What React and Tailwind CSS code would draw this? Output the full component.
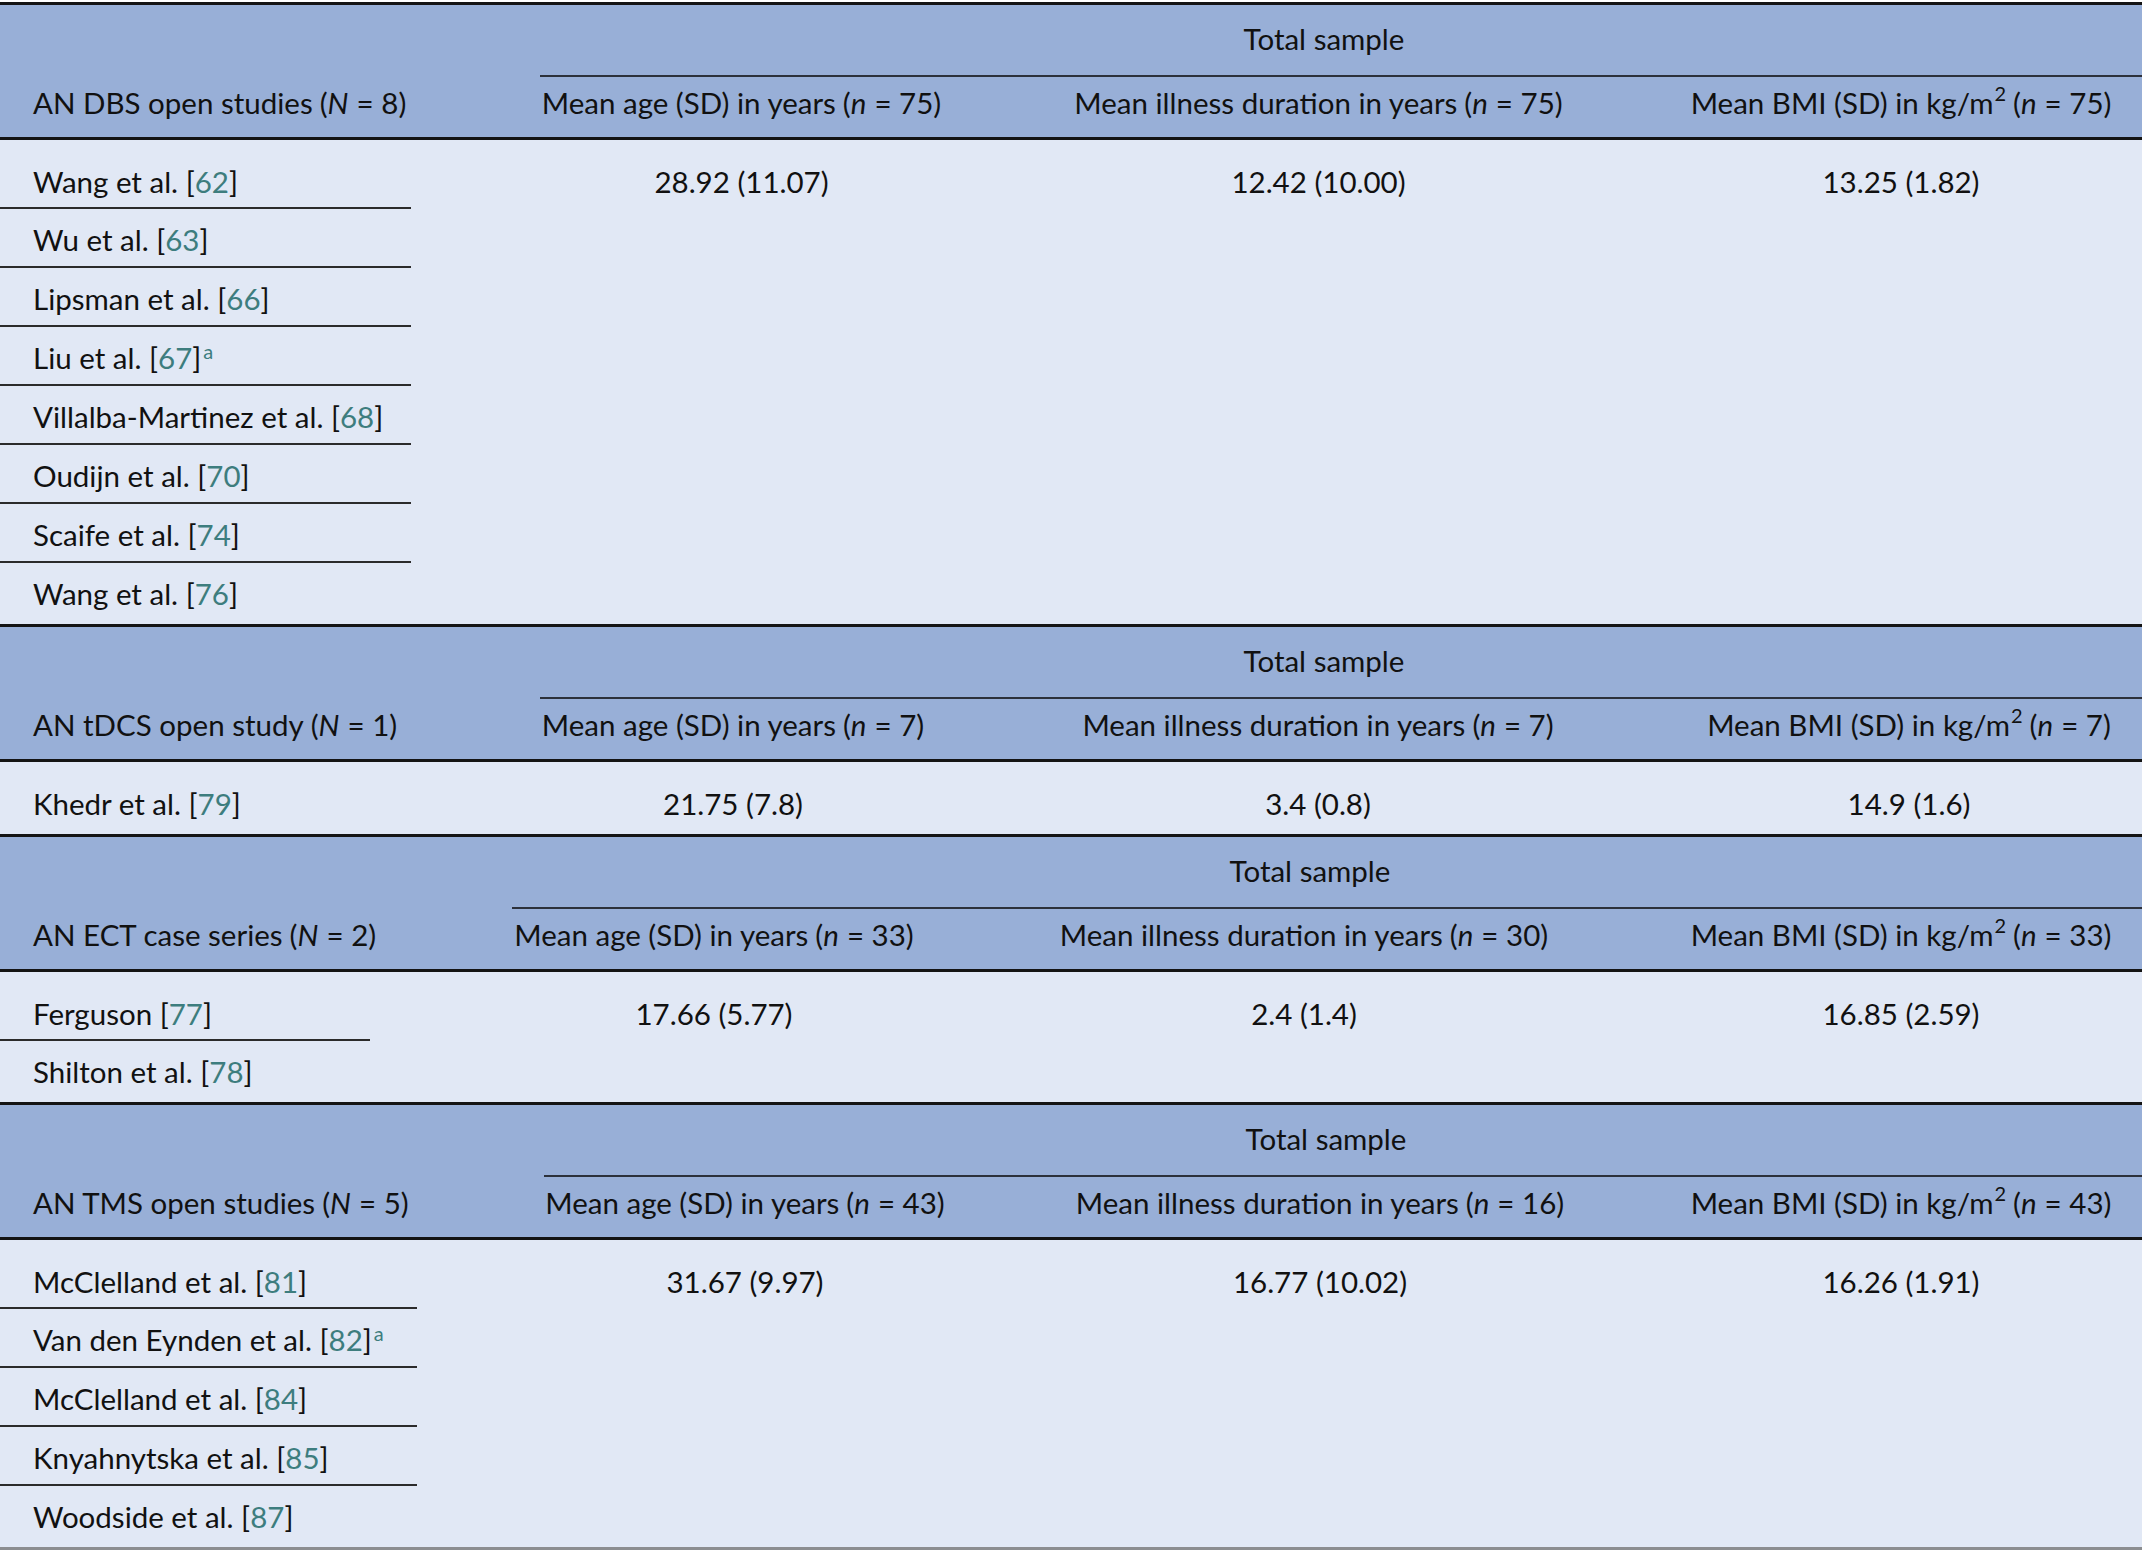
import { Fragment } from "react";

// each block of the table has its own column widths (auto layout in the source)
const sections = [
    {
        title: "AN DBS open studies",
        N: 8,
        grid: "grid-cols-[540px_532px_623px_447px]",
        pads: ["pr-[129px]", "pr-[130px]", "pr-[35px]"],
        line: "w-[411px]",
        n: [75, 75, 75],
        values: ["28.92 (11.07)", "12.42 (10.00)", "13.25 (1.82)"],
        studies: [
            ["Wang et al.", 62],
            ["Wu et al.", 63],
            ["Lipsman et al.", 66],
            ["Liu et al.", 67, true],
            ["Villalba-Martinez et al.", 68],
            ["Oudijn et al.", 70],
            ["Scaife et al.", 74],
            ["Wang et al.", 76],
        ],
    },
    {
        title: "AN tDCS open study",
        N: 1,
        grid: "grid-cols-[540px_539px_631px_432px]",
        pads: ["pr-[153px]", "pr-[153px]", "pr-[34px]"],
        line: "w-[411px]",
        n: [7, 7, 7],
        values: ["21.75 (7.8)", "3.4 (0.8)", "14.9 (1.6)"],
        studies: [["Khedr et al.", 79]],
    },
    {
        title: "AN ECT case series",
        N: 2,
        grid: "grid-cols-[512px_546px_637px_447px]",
        pads: ["pr-[142px]", "pr-[145px]", "pr-[35px]"],
        line: "w-[370px]",
        n: [33, 30, 33],
        values: ["17.66 (5.77)", "2.4 (1.4)", "16.85 (2.59)"],
        studies: [
            ["Ferguson", 77],
            ["Shilton et al.", 78],
        ],
    },
    {
        title: "AN TMS open studies",
        N: 5,
        grid: "grid-cols-[544px_530px_621px_447px]",
        pads: ["pr-[128px]", "pr-[129px]", "pr-[35px]"],
        line: "w-[417px]",
        n: [43, 16, 43],
        values: ["31.67 (9.97)", "16.77 (10.02)", "16.26 (1.91)"],
        studies: [
            ["McClelland et al.", 81],
            ["Van den Eynden et al.", 82, true],
            ["McClelland et al.", 84],
            ["Knyahnytska et al.", 85],
            ["Woodside et al.", 87],
        ],
    },
];

function Cite({ num, note }) {
    return (
        <>
            [<span className="text-[#3d7d7e]">{num}</span>]
            {note && <sup className="text-[20px] ml-[2px] text-[#3d7d7e]">a</sup>}
        </>
    );
}

// "(n = 75)" with the italic letter
function Eq({ v, letter = "n" }) {
    return (
        <span className="ml-[7px]">
            (<i className="mr-[8px]">{letter}</i>={" "}{v})
        </span>
    );
}

function Section({ s, last }) {
    const heads = [
        <>Mean age (SD) in years<Eq v={s.n[0]} /></>,
        <>Mean illness duration in years<Eq v={s.n[1]} /></>,
        <>Mean BMI (SD) in kg/m<sup className="text-[20px] ml-[1px]">2</sup><Eq v={s.n[2]} /></>,
    ];
    const count = s.studies.length;

    return (
        <div className="border-t-[3px] border-[#141414]">
            {/* header */}
            <div className={`grid ${s.grid} bg-[#98afd7]`}>
                <div className="row-span-2 flex items-end pl-[33px] pb-[14px] whitespace-nowrap">
                    {s.title}<Eq v={s.N} letter="N" />
                </div>
                <div className="col-span-3 h-[72px] flex items-center justify-center pr-[34px] pb-[2px] border-b-2 border-[#2c313b]">
                    Total sample
                </div>
                {heads.map((h, i) => (
                    <div key={i} className={`h-[60px] pt-[6px] pb-[14px] flex items-center justify-center whitespace-nowrap ${s.pads[i]}`}>
                        {h}
                    </div>
                ))}
            </div>

            {/* body */}
            <div className={`grid ${s.grid} bg-[#e1e8f5] border-t-[3px] border-[#141414] ${last ? "border-b-[3px] border-b-[#8b8d90]" : ""}`}>
                {s.studies.map(([name, num, note], i) => {
                    const isFirst = i === 0;
                    const isLast = i === count - 1;
                    let rowCls = "pt-[11px] pb-[6px] border-b-2 border-[#2b2b2b]";
                    if (isFirst && isLast) rowCls = "pt-[22px] pb-[10px]";
                    else if (isFirst) rowCls = "pt-[22px] pb-[5px] border-b-2 border-[#2b2b2b]";
                    else if (isLast) rowCls = "pt-[11px] pb-[10px]";
                    return (
                        <Fragment key={i}>
                            <div className="col-start-1">
                                <div className={`${s.line} ${rowCls} pl-[33px] whitespace-nowrap`}>
                                    {name} <Cite num={num} note={note} />
                                </div>
                            </div>
                            {isFirst &&
                                s.values.map((v, j) => (
                                    <div key={j} className={`pt-[22px] text-center whitespace-nowrap ${s.pads[j]}`}>
                                        {v}
                                    </div>
                                ))}
                        </Fragment>
                    );
                })}
            </div>
        </div>
    );
}

export default function App() {
    return (
        <main className="w-[2142px] h-[1551px] bg-white pt-[2px] text-[29.5px] leading-[40px] text-[#111] font-['Lato','Open_Sans',sans-serif] overflow-hidden">
            {sections.map((s, i) => (
                <Section key={i} s={s} last={i === sections.length - 1} />
            ))}
        </main>
    );
}
